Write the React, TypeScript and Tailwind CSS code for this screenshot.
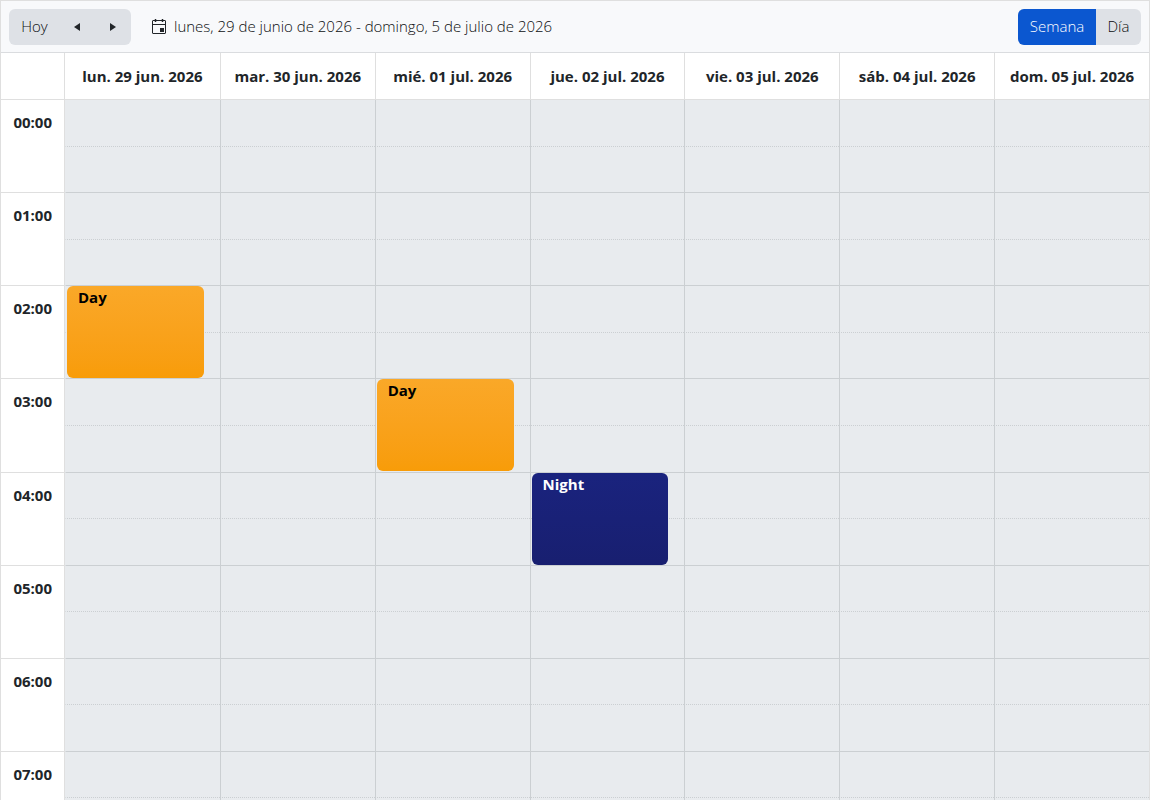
type ShiftEvent = {
  day: number;
  hour: number;
  title: string;
  kind: "day" | "night";
};

const days = [
  "lun. 29 jun. 2026",
  "mar. 30 jun. 2026",
  "mié. 01 jul. 2026",
  "jue. 02 jul. 2026",
  "vie. 03 jul. 2026",
  "sáb. 04 jul. 2026",
  "dom. 05 jul. 2026",
];

const hours = Array.from({ length: 8 }, (_, hour) => hour);

const events: ShiftEvent[] = [
  { day: 0, hour: 2, title: "Day", kind: "day" },
  { day: 2, hour: 3, title: "Day", kind: "day" },
  { day: 3, hour: 4, title: "Night", kind: "night" },
];

const eventColors = {
  day: "bg-linear-to-b from-[#faa828] to-[#f89c08] text-black",
  night: "bg-linear-to-b from-[#1a237e] to-[#181f70] text-white",
};

function CalendarIcon() {
  return (
    <svg width="14" height="16" viewBox="0 0 14 16" fill="none" aria-hidden="true">
      <rect x="0.5" y="1.5" width="13" height="13" rx="0.5" stroke="#212529" />
      <path d="M0.5 5.5H13.5" stroke="#212529" />
      <path d="M3.5 0V3M10.5 0V3" stroke="#212529" strokeWidth="1.5" />
      <rect x="8" y="9" width="4" height="4" fill="#212529" />
    </svg>
  );
}

function Toolbar() {
  return (
    <header className="flex h-[52px] shrink-0 items-center border-b border-[#dadcdf] bg-[#f8f9fb] px-2 text-[#0c0e10]">
      <div className="flex h-9 overflow-hidden rounded-md bg-[#dee1e6]">
        <button type="button" className="w-[51px]">Hoy</button>
        <button type="button" aria-label="Anterior" className="flex w-[34px] items-center justify-center">
          <svg width="6" height="8" viewBox="0 0 6 8" fill="#212529">
            <path d="M6 0V8L0 4Z" />
          </svg>
        </button>
        <button type="button" aria-label="Siguiente" className="flex w-[37px] items-center justify-center">
          <svg width="6" height="8" viewBox="0 0 6 8" fill="#212529">
            <path d="M0 0V8L6 4Z" />
          </svg>
        </button>
      </div>
      <button type="button" className="ml-[21px] flex items-center gap-2">
        <CalendarIcon />
        <span>lunes, 29 de junio de 2026 - domingo, 5 de julio de 2026</span>
      </button>
      <div className="ml-auto flex h-9 overflow-hidden rounded-md bg-[#dee1e6]">
        <button type="button" aria-pressed="true" className="w-[78px] bg-[#0b57d0] text-white">Semana</button>
        <button type="button" aria-pressed="false" className="w-[45px]">Día</button>
      </div>
    </header>
  );
}

function EventCard({ event }: { event: ShiftEvent }) {
  return (
    <div
      className={`absolute top-0 right-4 left-px z-10 h-[92px] rounded-md px-[11px] py-px text-[15px] leading-5 font-bold ${eventColors[event.kind]}`}
    >
      {event.title}
    </div>
  );
}

function WeekTable() {
  return (
    <table className="h-[792px] w-full table-fixed border-separate border-spacing-0">
      <colgroup>
        <col className="w-16" />
        {days.map((day) => (
          <col key={day} />
        ))}
      </colgroup>
      <thead>
        <tr className="h-[47px]">
          <td className="border-r border-b border-[#dfdfdf]" />
          {days.map((day, i) => (
            <th
              key={day}
              scope="col"
              className={`border-b border-[#dfdfdf] text-[15px] font-bold whitespace-nowrap ${i > 0 ? "border-l" : ""}`}
            >
              {day}
            </th>
          ))}
        </tr>
      </thead>
      {hours.map((hour) => (
        <tbody key={hour}>
          <tr>
            <th
              rowSpan={2}
              scope="row"
              className="border-r border-b border-[#dfdfdf] pt-3 pr-3 text-right align-top text-[15px] leading-5 font-bold"
            >
              {String(hour).padStart(2, "0")}:00
            </th>
            {days.map((day, i) => (
              <td
                key={day}
                className={`relative border-b border-l border-[#cbcfd2] bg-[#e8ebee] [border-bottom-style:dotted] ${i === 0 ? "border-l-[#e8ebee]" : ""}`}
              >
                {events
                  .filter((event) => event.day === i && event.hour === hour)
                  .map((event) => (
                    <EventCard key={event.title} event={event} />
                  ))}
              </td>
            ))}
          </tr>
          <tr>
            {days.map((day, i) => (
              <td
                key={day}
                className={`border-b border-l border-[#cbcfd2] bg-[#e8ebee] ${i === 0 ? "border-l-[#e8ebee]" : ""}`}
              />
            ))}
          </tr>
        </tbody>
      ))}
    </table>
  );
}

export default function App() {
  return (
    <main className="flex h-screen flex-col border-x border-t border-[#dfdfdf] bg-white font-['Open_Sans',sans-serif] text-[15px] font-light text-[#212529]">
      <Toolbar />
      <div className="min-h-0 flex-1 overflow-y-auto [scrollbar-width:none]">
        <WeekTable />
      </div>
    </main>
  );
}
